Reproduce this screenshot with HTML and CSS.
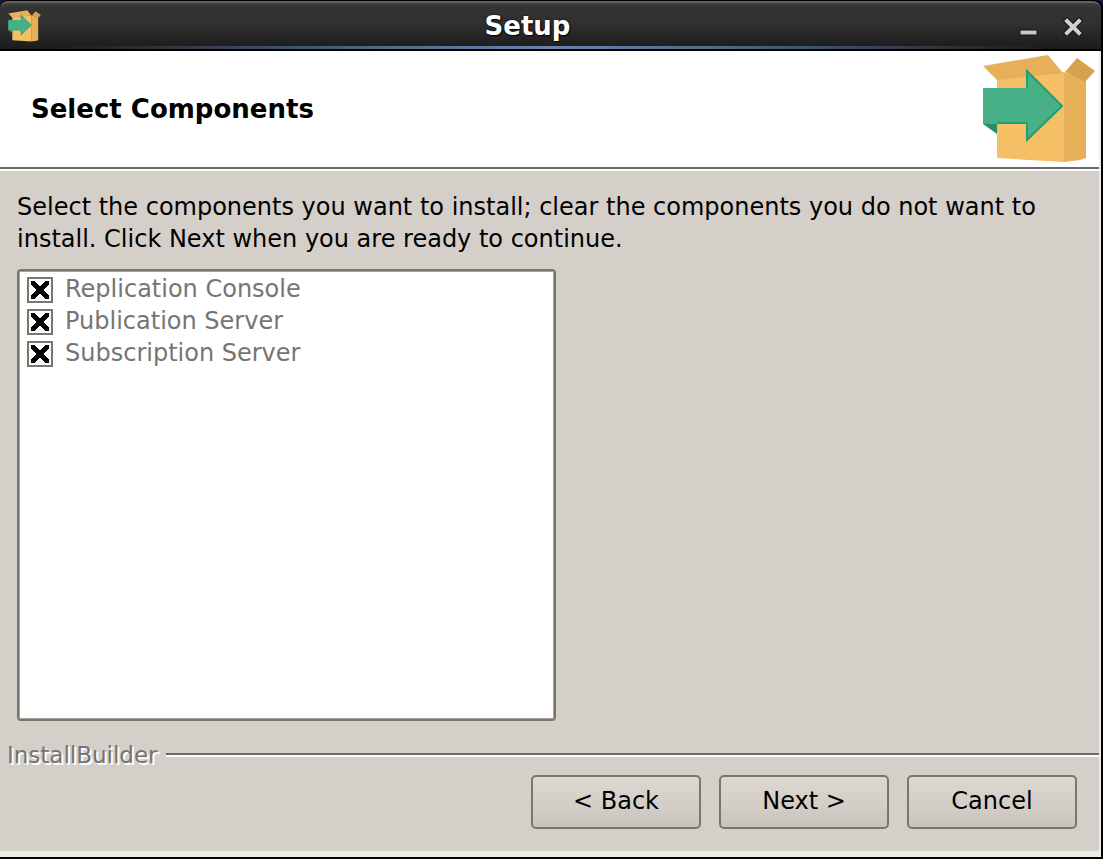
FILE: index.html
```html
<!DOCTYPE html>
<html lang="en">
<head>
<meta charset="utf-8">
<title>Setup</title>
<link rel="stylesheet" href="styles.css">
</head>
<body>
<svg class="defs" aria-hidden="true">
  <symbol id="box" viewBox="0 0 112 110">
    <path fill="#f5bf66" d="M14 25L81 18V108L14 104Z"/>
    <path fill="#e7af58" d="M81 18L103 27V104L97 106L81 108Z"/>
    <path fill="#e7af58" d="M0 12L65 1L80 19L14 26Z"/>
    <path fill="#d6a24e" d="M82 18L94 4L112 17L102 28Z"/>
    <path fill="#278f68" d="M0 70H14V80Z"/>
    <path fill="#47b086" d="M0 34H44V17L80 52L44 87V70H0Z"/>
    <path fill="none" stroke="#1f9f75" stroke-width="2" d="M44 34V17L79 52L44 86V69H14"/>
  </symbol>
</svg>
<div class="window">
  <header class="titlebar">
    <svg class="app-icon" aria-hidden="true"><use href="#box"/></svg>
    <h1 class="title">Setup</h1>
    <div class="window-actions">
      <button class="window-button" type="button" aria-label="Minimize">
        <svg width="20" height="20" viewBox="0 0 20 20"><path d="M1 14H18V19H1Z" fill="#c9c8c7" stroke="#111" stroke-width="1"/></svg>
      </button>
      <button class="window-button" type="button" aria-label="Close">
        <svg width="20" height="20" viewBox="0 0 20 20"><path d="M4 5L16 17M16 5L4 17" stroke="#111" stroke-width="6" stroke-linecap="square"/><path d="M4 5L16 17M16 5L4 17" stroke="#d2d0cf" stroke-width="4" stroke-linecap="square"/></svg>
      </button>
    </div>
  </header>
  <div class="content">
    <div class="banner">
      <h2 class="heading">Select Components</h2>
      <svg class="banner-icon" aria-hidden="true"><use href="#box"/></svg>
    </div>
    <main class="page">
      <p class="intro">Select the components you want to install; clear the components you do not want to install. Click Next when you are ready to continue.</p>
      <div class="components">
        <label class="component"><input class="check" type="checkbox" checked disabled>Replication Console</label>
        <label class="component"><input class="check" type="checkbox" checked disabled>Publication Server</label>
        <label class="component"><input class="check" type="checkbox" checked disabled>Subscription Server</label>
      </div>
    </main>
    <div class="brand"><span>InstallBuilder</span></div>
    <footer class="actions">
      <button class="button" type="button">&lt; Back</button>
      <button class="button" type="button">Next &gt;</button>
      <button class="button" type="button">Cancel</button>
    </footer>
  </div>
</div>
</body>
</html>
```
FILE: styles.css
```css
* { box-sizing: border-box; }

body {
  margin: 0;
  background: #101b42;
  color: #000;
  font: 24px/32px "DejaVu Sans", sans-serif;
}

.defs {
  position: absolute;
  width: 0;
  height: 0;
}

.window {
  display: flex;
  flex-direction: column;
  min-height: 100vh;
  background: #000;
  border-radius: 8px 8px 0 0;
  padding: 1px 2px 2px 0;
}

.titlebar {
  display: grid;
  grid-template-columns: 1fr auto 1fr;
  align-items: center;
  height: 50px;
  padding: 0 18px 0 8px;
  border-top: 2px solid #625f60;
  border-bottom: 2px solid #000;
  border-radius: 8px 8px 0 0;
  background:
    linear-gradient(90deg, transparent 5%, #50698c 35%, #6884ad 50%, #50698c 65%, transparent 95%) bottom / 100% 3px no-repeat,
    linear-gradient(#414041, #333 10%, #303030 45%, #1b1b1b);
}

.app-icon {
  width: 33px;
  height: 32px;
}

.title {
  margin: 0;
  padding-right: 36px;
  color: #fff;
  font-size: 26px;
  line-height: 32px;
  text-shadow: 0 0 2px #000, 1px 1px 1px #000;
}

.window-actions {
  display: flex;
  justify-content: flex-end;
  gap: 24px;
}

.window-button {
  display: flex;
  padding: 0;
  border: 0;
  background: none;
}

.content {
  display: flex;
  flex: 1;
  flex-direction: column;
  background: #d4d0c9;
  border-right: 2px solid #edebe8;
  border-bottom: 6px solid #edebe8;
}

.banner {
  display: flex;
  align-items: center;
  justify-content: space-between;
  height: 118px;
  padding: 0 4px 0 31px;
  border-bottom: 2px solid #6b6965;
  background: #fff;
}

.heading {
  margin: 0;
  font-size: 26px;
  line-height: 32px;
}

.banner-icon {
  width: 112px;
  height: 110px;
}

.page {
  display: flex;
  flex: 1;
  flex-direction: column;
  padding: 20px 5px 18px 17px;
  border-top: 2px solid #fff;
}

.intro {
  margin: 0 0 14px;
}

.components {
  flex: 1;
  width: 50%;
  min-width: 320px;
  padding: 2px 8px;
  border: 2px solid #7a766f;
  border-radius: 4px;
  background: #fff;
  box-shadow: inset 0 0 0 1px #a5a29c;
}

.component {
  display: flex;
  align-items: center;
  gap: 12px;
  color: #767573;
}

.check {
  appearance: none;
  width: 26px;
  height: 26px;
  margin: 2px 0 0;
  border: 2px solid #7a766f;
  background:
    linear-gradient(45deg, transparent 39%, #000 40% 60%, transparent 61%) center / 18px 18px no-repeat,
    linear-gradient(135deg, transparent 39%, #000 40% 60%, transparent 61%) center / 18px 18px no-repeat,
    #fff;
}

.brand {
  display: flex;
  align-items: center;
  gap: 8px;
  padding-left: 7px;
  color: #767573;
  font-size: 23px;
  text-shadow: 2px 2px 0 #fff;
}

.brand::after {
  content: "";
  flex: 1;
  border-top: 2px solid #6b6965;
  border-bottom: 2px solid #fff;
}

.actions {
  display: flex;
  justify-content: flex-end;
  gap: 18px;
  padding: 4px 22px 22px;
}

.button {
  width: 170px;
  height: 54px;
  padding: 0 0 2px;
  border: 2px solid #7a766f;
  border-radius: 5px;
  background: linear-gradient(#dcd8d0, #d2cec7 60%, #c7c3bc);
  color: #000;
  font: inherit;
}
```
